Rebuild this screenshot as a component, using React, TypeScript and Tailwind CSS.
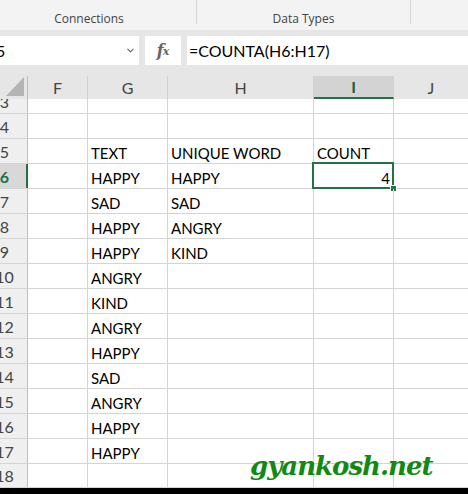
import { ChevronDown } from 'lucide-react'

type RowData = { n: number; g?: string; h?: string; i?: string; height?: string }

const rows: RowData[] = [
  { n: 3, height: 'h-[15px]' },
  { n: 4 },
  { n: 5, g: 'TEXT', h: 'UNIQUE WORD', i: 'COUNT' },
  { n: 6, g: 'HAPPY', h: 'HAPPY', i: '4' },
  { n: 7, g: 'SAD', h: 'SAD' },
  { n: 8, g: 'HAPPY', h: 'ANGRY' },
  { n: 9, g: 'HAPPY', h: 'KIND' },
  { n: 10, g: 'ANGRY' },
  { n: 11, g: 'KIND' },
  { n: 12, g: 'ANGRY' },
  { n: 13, g: 'HAPPY' },
  { n: 14, g: 'SAD' },
  { n: 15, g: 'ANGRY' },
  { n: 16, g: 'HAPPY' },
  { n: 17, g: 'HAPPY' },
  { n: 18, height: 'h-[24px]' },
]

const SEL_ROW = 6

function Row({ r }: { r: RowData }) {
  const sel = r.n === SEL_ROW
  return (
    <div className={`flex shrink-0 ${r.height || 'h-[25px]'} border-b border-[#d4d4d4] text-[15px] text-black`}>
      <div
        className={`w-[28px] shrink-0 overflow-hidden flex items-end pb-[2px] text-[16px] ${
          sel
            ? 'bg-[#d8d8d8] border-r-2 border-[#217346] text-[#217346] font-bold'
            : 'bg-[#efefef] border-r border-[#bdbdbd] text-[#444]'
        }`}
      >
        <div className="w-[9px] shrink-0 flex justify-center whitespace-nowrap leading-[18px]">{r.n}</div>
      </div>
      <div className="w-[60px] shrink-0 border-r border-[#d4d4d4]" />
      <div className="w-[80px] shrink-0 border-r border-[#d4d4d4] flex items-end pl-[3px] pb-[1px] leading-[18px] whitespace-nowrap">
        {r.g}
      </div>
      <div className="w-[146px] shrink-0 border-r border-[#d4d4d4] flex items-end pl-[3px] pb-[1px] leading-[18px] whitespace-nowrap">
        {r.h}
      </div>
      <div
        className={`relative w-[80px] shrink-0 border-r border-[#d4d4d4] flex items-end pb-[1px] leading-[18px] whitespace-nowrap ${
          sel ? 'justify-end pr-[3px]' : 'pl-[3px]'
        }`}
      >
        {r.i}
        {sel && (
          <>
            <div className="absolute -top-[2px] -left-[2px] -right-[1px] -bottom-[1px] border-2 border-[#217346]" />
            <div className="absolute -right-[4px] -bottom-[4px] w-[7px] h-[7px] bg-[#217346] border border-white" />
          </>
        )}
      </div>
      <div className="flex-1" />
    </div>
  )
}

export default function App() {
  return (
    <div className="relative w-[468px] h-[494px] overflow-hidden bg-white flex flex-col font-['Lato',sans-serif]">
      {/* ribbon group labels */}
      <div className="h-[30px] shrink-0 bg-[#f3f3f3] flex text-[12px] text-[#444] font-['Open_Sans',sans-serif]">
        <div className="w-[197px] h-[24px] shrink-0 border-r border-[#d6d6d6] flex justify-center pr-[18px] pt-[11px] leading-[16px]">
          Connections
        </div>
        <div className="w-[214px] h-[24px] shrink-0 border-r border-[#d6d6d6] flex justify-center pt-[11px] leading-[16px]">
          Data Types
        </div>
        <div className="flex-1" />
      </div>

      {/* formula bar */}
      <div className="h-[46px] shrink-0 bg-[#e6e6e6] pt-[6px]">
        <div className="flex h-[29px]">
          <div className="w-[139px] shrink-0 bg-white flex items-center justify-between pr-[3px] text-[16px] text-black overflow-hidden">
            <span className="-ml-[4px]">5</span>
            <ChevronDown size={11} strokeWidth={2.5} className="text-[#666]" />
          </div>
          <div className="ml-[6px] w-[36px] shrink-0 bg-white flex items-center justify-center text-[#666] font-['DejaVu_Serif',serif] italic font-bold">
            <span className="text-[16px]">f</span>
            <span className="text-[11px] -ml-[1px] mt-[3px]">x</span>
          </div>
          <div className="ml-[6px] flex-1 bg-white flex items-center pl-[2px] text-[16px] text-black">
            =COUNTA(H6:H17)
          </div>
        </div>
      </div>

      {/* column headers */}
      <div className="h-[23px] shrink-0 flex bg-[#e6e6e6] text-[16px] text-[#444]">
        <div className="w-[28px] shrink-0 border-r border-[#bdbdbd] flex items-end justify-end pr-[3px] pb-[3px]">
          <svg width="18" height="19" viewBox="0 0 18 19">
            <polygon points="18,0 18,19 0,19" fill="#b4b4b4" />
          </svg>
        </div>
        <div className="w-[60px] shrink-0 border-r border-[#d0d0d0] flex items-center justify-center">F</div>
        <div className="w-[80px] shrink-0 border-r border-[#d0d0d0] flex items-center justify-center">G</div>
        <div className="w-[146px] shrink-0 border-r border-[#d0d0d0] flex items-center justify-center">H</div>
        <div className="w-[80px] shrink-0 border-r border-[#d0d0d0] bg-[#d3d3d3] border-b-2 border-b-[#217346] flex items-center justify-center text-[#1e5e3a] font-bold">
          I
        </div>
        <div className="flex-1 flex items-center justify-center">J</div>
      </div>

      {/* grid */}
      <div className="flex flex-col">
        {rows.map(r => (
          <Row key={r.n} r={r} />
        ))}
      </div>
      <div className="flex-1 bg-black" />

      {/* watermark */}
      <div className="absolute left-[250px] top-[448px] text-[26px] leading-[36px] text-[#128a12] italic font-bold font-['DejaVu_Serif',serif] tracking-[-1px]">
        gyankosh.net
      </div>
    </div>
  )
}
